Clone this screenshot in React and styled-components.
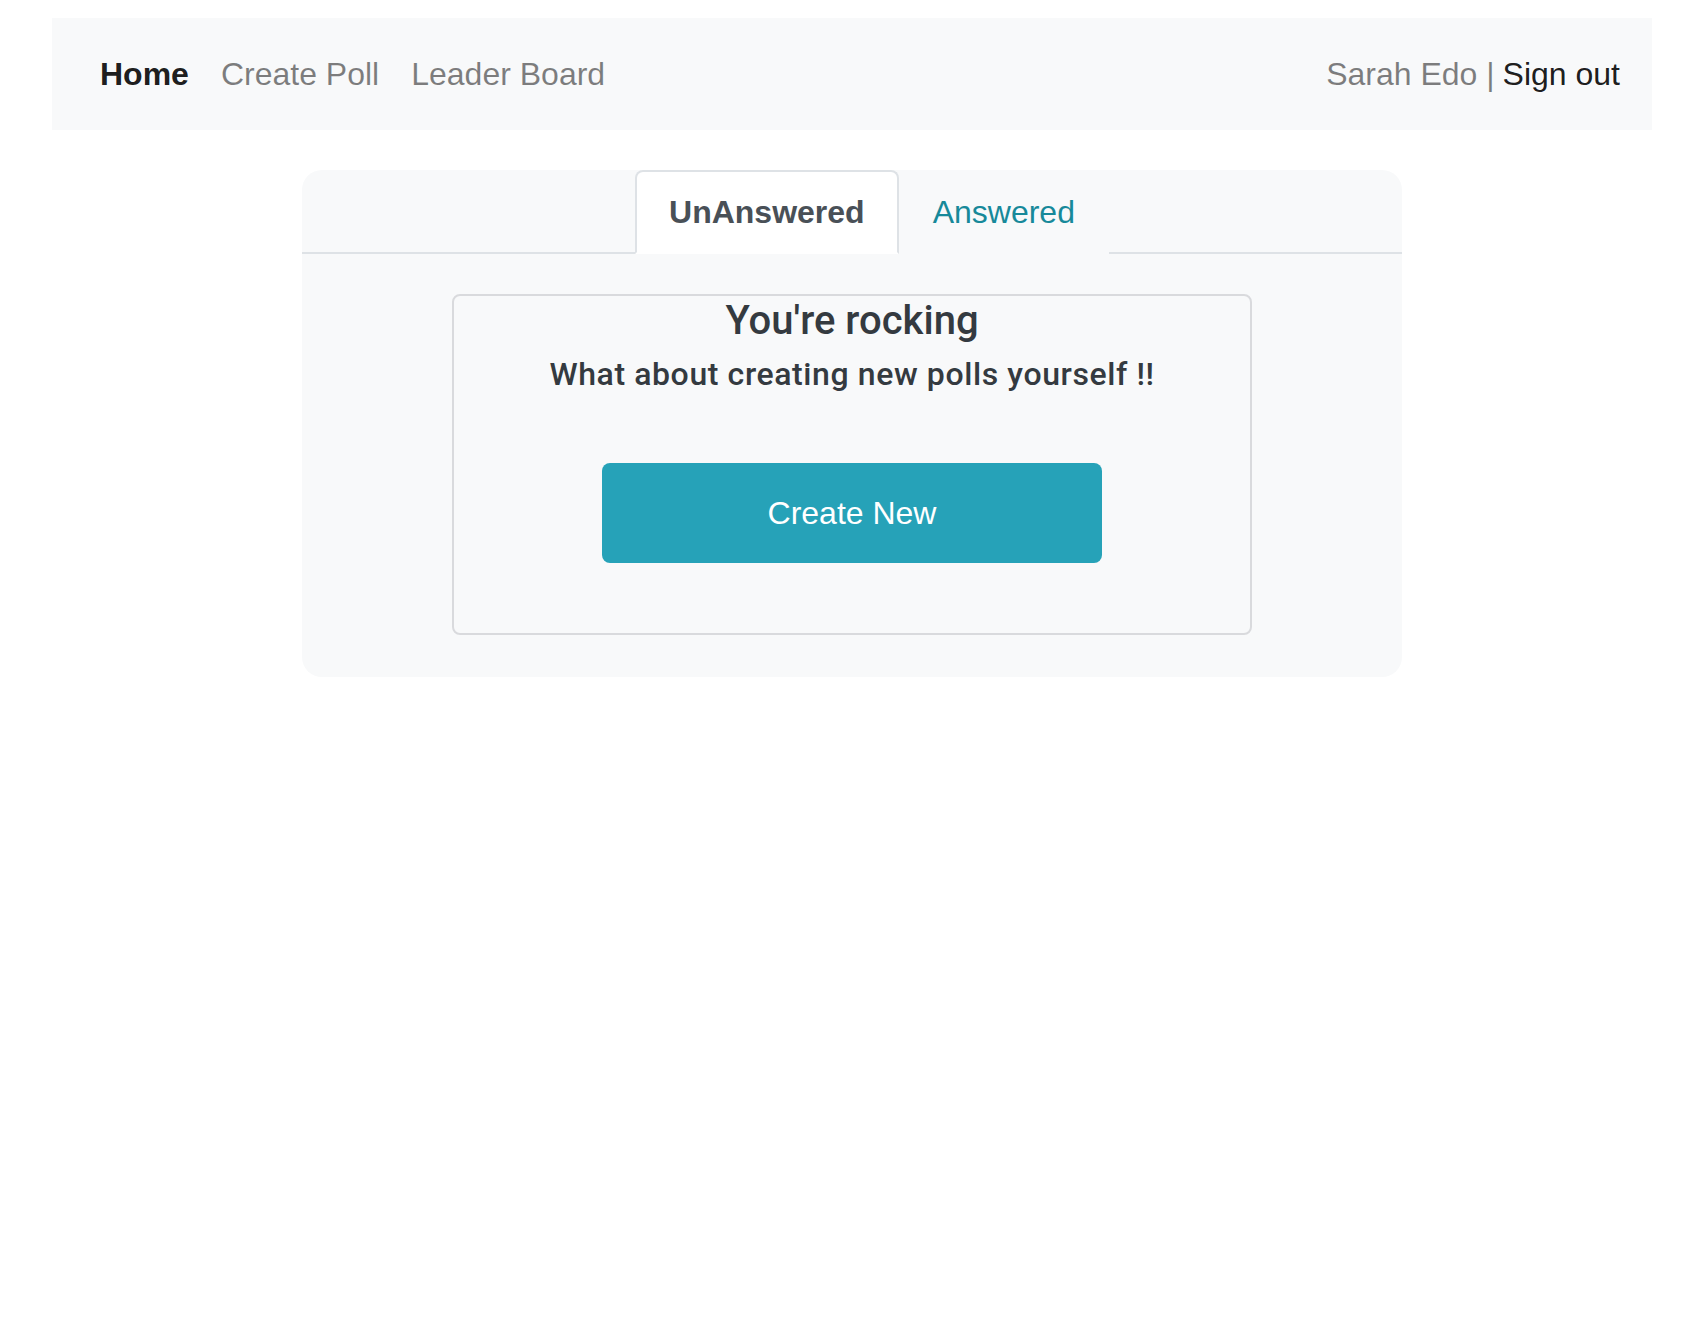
import React, { useState } from 'react';
import styled, { createGlobalStyle } from 'styled-components';

const GlobalStyle = createGlobalStyle`
  html, body {
    margin: 0;
    padding: 0;
    background: #ffffff;
    font-family: "Liberation Sans", Arial, sans-serif;
    color: #212529;
  }
  * {
    box-sizing: border-box;
  }
`;

const App = () => {
  const [tab, setTab] = useState('unanswered');

  return (
    <Page>
      <GlobalStyle />
      <Navbar>
        <NavLinks>
          <NavLink $active>Home</NavLink>
          <NavLink>Create Poll</NavLink>
          <NavLink>Leader Board</NavLink>
        </NavLinks>
        <UserArea>
          <UserName>Sarah Edo |</UserName>
          <SignOut>Sign out</SignOut>
        </UserArea>
      </Navbar>

      <Card>
        <CardHeader>
          <Tab $active={tab === 'unanswered'} onClick={() => setTab('unanswered')}>
            UnAnswered
          </Tab>
          <Tab $active={tab === 'answered'} onClick={() => setTab('answered')}>
            Answered
          </Tab>
        </CardHeader>

        <CardBody>
          <EmptyBox>
            <Heading>You're rocking</Heading>
            <SubHeading>What about creating new polls yourself !!</SubHeading>
            <CreateButton>Create New</CreateButton>
          </EmptyBox>
        </CardBody>
      </Card>
    </Page>
  );
};

const Page = styled.div`
  padding: 18px 32px 0 52px;
  min-height: 100vh;
`;

const Navbar = styled.nav`
  display: flex;
  align-items: center;
  justify-content: space-between;
  height: 112px;
  padding: 16px 32px;
  background: #f8f9fa;
`;

const NavLinks = styled.div`
  display: flex;
  align-items: center;
`;

const NavLink = styled.a`
  padding: 16px;
  font-size: 32px;
  line-height: 48px;
  font-weight: ${(p) => (p.$active ? 700 : 400)};
  color: ${(p) => (p.$active ? 'rgba(0, 0, 0, 0.9)' : 'rgba(0, 0, 0, 0.5)')};
  cursor: pointer;
`;

const UserArea = styled.div`
  display: flex;
  align-items: center;
  gap: 8px;
  font-size: 32px;
  line-height: 48px;
`;

const UserName = styled.span`
  color: rgba(0, 0, 0, 0.5);
`;

const SignOut = styled.a`
  color: rgba(0, 0, 0, 0.9);
  cursor: pointer;
`;

const Card = styled.div`
  width: 1100px;
  margin: 40px auto 0;
  background: #f8f9fa;
  border-radius: 20px;
  overflow: hidden;
`;

const CardHeader = styled.div`
  display: flex;
  justify-content: center;
  padding: 0 0 0 40px;
  border-bottom: 2px solid #dee2e6;
`;

const Tab = styled.button`
  margin-bottom: -2px;
  padding: 16px 32px;
  font-family: "Liberation Sans", Arial, sans-serif;
  font-size: 32px;
  line-height: 48px;
  font-weight: ${(p) => (p.$active ? 700 : 400)};
  color: ${(p) => (p.$active ? '#495057' : '#17899a')};
  background: ${(p) => (p.$active ? '#ffffff' : '#f8f9fa')};
  border: 2px solid ${(p) => (p.$active ? '#dee2e6' : 'transparent')};
  border-bottom-color: ${(p) => (p.$active ? '#ffffff' : '#f8f9fa')};
  border-radius: 8px 8px 0 0;
  cursor: pointer;
`;

const CardBody = styled.div`
  padding: 40px 40px 42px;
`;

const EmptyBox = styled.div`
  display: flex;
  flex-direction: column;
  align-items: center;
  width: 800px;
  margin: 0 auto;
  padding: 1px 0 70px;
  border: 2px solid #d9dadd;
  border-radius: 8px;
`;

const Heading = styled.h3`
  margin: 0 0 10px;
  font-family: Roboto, "Liberation Sans", sans-serif;
  font-size: 40px;
  line-height: 48px;
  font-weight: 500;
  color: #343a40;
`;

const SubHeading = styled.h5`
  margin: 0;
  font-family: Roboto, "Liberation Sans", sans-serif;
  font-size: 32px;
  line-height: 38px;
  font-weight: 500;
  letter-spacing: 0.6px;
  color: #343a40;
`;

const CreateButton = styled.button`
  width: 500px;
  height: 100px;
  margin-top: 70px;
  font-family: "Liberation Sans", Arial, sans-serif;
  font-size: 32px;
  color: #ffffff;
  background: #26a2b8;
  border: none;
  border-radius: 8px;
  cursor: pointer;
`;

export default App;
